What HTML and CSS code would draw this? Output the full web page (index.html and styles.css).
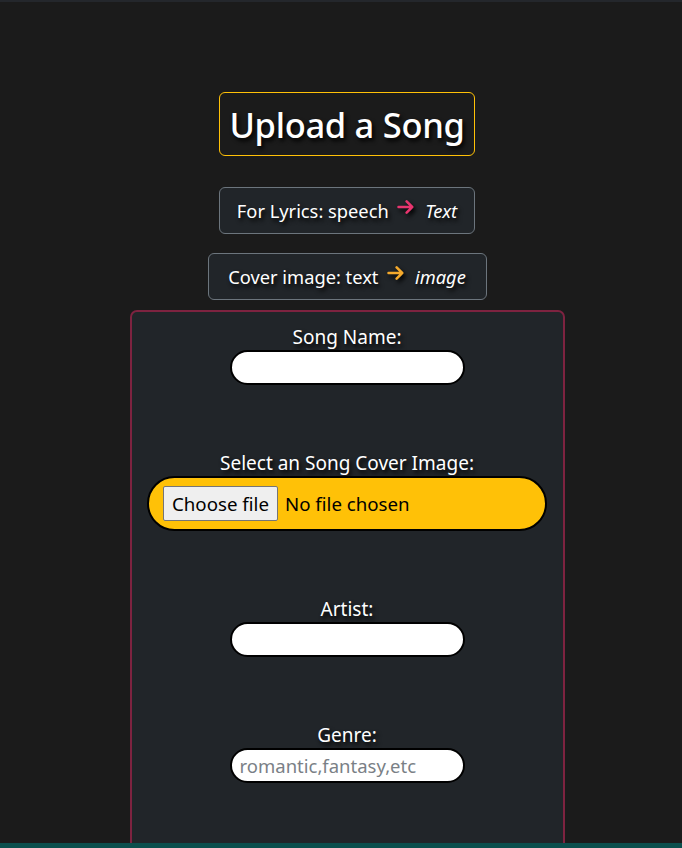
FILE: index.html
```html
<!DOCTYPE html>
<html lang="en">
<head>
<meta charset="utf-8">
<title>Upload a Song</title>
<link rel="stylesheet" href="styles.css">
</head>
<body>
<div class="topbar"></div>
<main class="page">
  <h1 class="title">Upload a Song</h1>
  <div class="hint hint-lyrics">For Lyrics: speech <svg class="arrow arrow-pink" viewBox="0 0 16 16" width="20" height="20"><path d="M2 8h11M8.5 3.5L13 8l-4.5 4.5" fill="none" stroke="currentColor" stroke-width="2" stroke-linecap="round" stroke-linejoin="round"/></svg> <em>Text</em></div>
  <div class="hint hint-cover">Cover image: text <svg class="arrow arrow-orange" viewBox="0 0 16 16" width="20" height="20"><path d="M2 8h11M8.5 3.5L13 8l-4.5 4.5" fill="none" stroke="currentColor" stroke-width="2" stroke-linecap="round" stroke-linejoin="round"/></svg> <em>image</em></div>
  <form class="upload">
    <div class="field">
      <label class="lbl" for="name">Song Name:</label>
      <input class="txt" id="name" type="text">
    </div>
    <div class="field">
      <label class="lbl">Select an Song Cover Image:</label>
      <div class="file"><span class="file-btn">Choose file</span><span class="file-none">No file chosen</span></div>
    </div>
    <div class="field">
      <label class="lbl" for="artist">Artist:</label>
      <input class="txt" id="artist" type="text">
    </div>
    <div class="field">
      <label class="lbl" for="genre">Genre:</label>
      <input class="txt" id="genre" type="text" placeholder="romantic,fantasy,etc">
    </div>
  </form>
</main>
<footer class="foot"></footer>
</body>
</html>
```
FILE: styles.css
```css
html, body {
  margin: 0;
  padding: 0;
}
body {
  background: #1b1b1b;
  color: #fff;
  font-family: "Noto Sans", "Open Sans", sans-serif;
  height: 848px;
  overflow: hidden;
  position: relative;
}
.topbar {
  height: 2px;
  background: #24272c;
}
.page {
  display: flex;
  flex-direction: column;
  align-items: center;
  padding-top: 90px;
  padding-left: 12px;
}
.title {
  margin: 0;
  box-sizing: border-box;
  width: 256px;
  height: 64px;
  display: flex;
  align-items: center;
  justify-content: center;
  border: 1px solid #ffc107;
  border-radius: 6px;
  font-size: 34.5px;
  font-weight: 500;
  letter-spacing: -0.3px;
  text-shadow: 2px 3px 4px #000;
}
.hint {
  box-sizing: border-box;
  height: 47px;
  line-height: 45px;
  text-align: center;
  background: #212529;
  border: 1px solid #6c757d;
  border-radius: 6px;
  font-size: 18.3px;
  text-shadow: 2px 3px 4px #000;
  white-space: nowrap;
}
.hint em {
  font-style: italic;
  margin-left: 4px;
}
.hint-lyrics {
  margin-top: 31px;
  width: 256px;
}
.hint-cover {
  margin-top: 19px;
  width: 279px;
}
.arrow {
  margin: 0 0 0 3px;
  vertical-align: 1px;
  filter: drop-shadow(2px 3px 2px #000);
}
.arrow-pink { color: #e8356f; }
.arrow-orange { color: #f4a92c; }
.upload {
  margin-top: 10px;
  box-sizing: border-box;
  width: 435px;
  height: 560px;
  background: #212529;
  border: 2px solid #7e2340;
  border-radius: 7px;
  display: flex;
  flex-direction: column;
  align-items: center;
  padding-top: 12px;
  gap: 65px;
}
.field {
  display: flex;
  flex-direction: column;
  align-items: center;
}
.lbl {
  font-size: 19px;
  line-height: 26px;
  text-shadow: 2px 3px 4px #000;
}
.txt {
  box-sizing: border-box;
  width: 235px;
  height: 35px;
  border: 2px solid #000;
  border-radius: 18px;
  background: #fff;
  font-family: inherit;
  font-size: 18.5px;
  padding: 0 8px;
  outline: none;
}
.txt::placeholder {
  color: #7a7f86;
}
.file {
  box-sizing: border-box;
  width: 400px;
  height: 55px;
  background: #ffc107;
  border: 2px solid #000;
  border-radius: 28px;
  display: flex;
  align-items: center;
  padding-left: 14px;
  color: #000;
  font-size: 18.7px;
}
.file-btn {
  box-sizing: border-box;
  height: 35px;
  padding: 0 8px;
  display: flex;
  align-items: center;
  background: #efefef;
  border: 1px solid #767676;
  border-radius: 2px;
  margin-right: 7px;
}
.foot {
  position: absolute;
  left: 0;
  right: 0;
  bottom: 0;
  height: 5px;
  background: #0b4f4d;
}
```
